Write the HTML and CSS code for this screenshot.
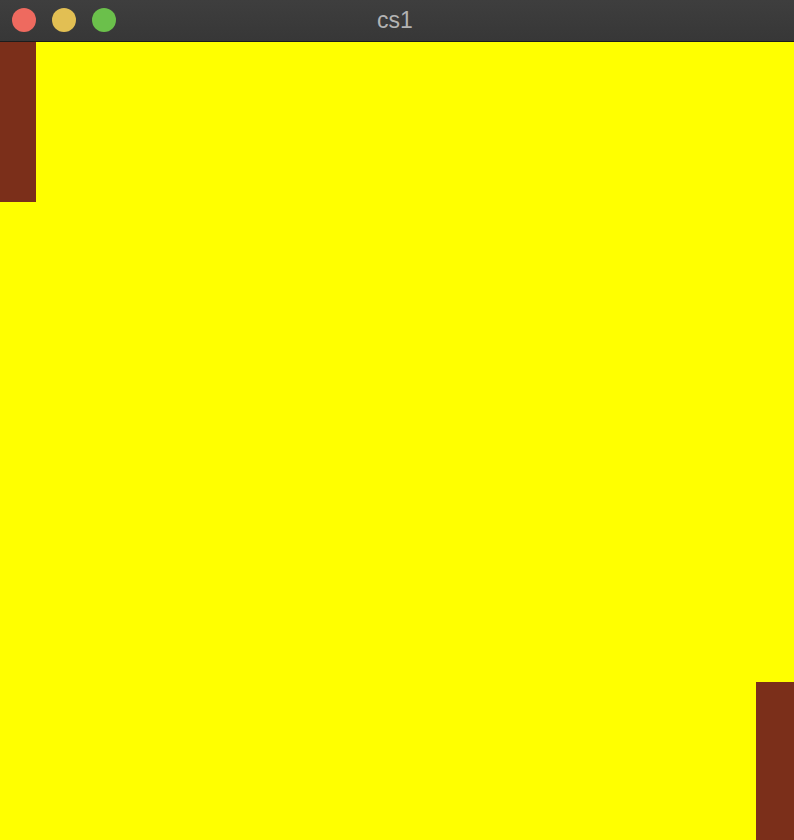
FILE: index.html
```html
<!DOCTYPE html>
<html>
<head>
<meta charset="utf-8">
<link rel="stylesheet" href="styles.css">
</head>
<body>
<div class="window">
  <div class="titlebar">
    <div class="lights">
      <span class="light red"></span>
      <span class="light amber"></span>
      <span class="light green"></span>
    </div>
    <div class="title">cs1</div>
  </div>
  <div class="canvas">
    <div class="block left"></div>
    <div class="block right"></div>
  </div>
</div>
</body>
</html>
```
FILE: styles.css
```css
html, body {
  margin: 0;
  padding: 0;
  width: 794px;
  height: 840px;
  overflow: hidden;
  background: #ffff00;
}
.window {
  width: 794px;
  height: 840px;
  display: flex;
  flex-direction: column;
}
.titlebar {
  height: 41px;
  flex: 0 0 41px;
  background: linear-gradient(#3e3e3e, #373737);
  border-bottom: 1px solid #1c1c1c;
  position: relative;
  display: flex;
  align-items: center;
}
.lights {
  display: flex;
  gap: 16px;
  padding-left: 12px;
  margin-top: -1px;
}
.light {
  width: 24px;
  height: 24px;
  border-radius: 50%;
  display: block;
}
.red { background: #ee6a5f; }
.amber { background: #e2bf53; }
.green { background: #6bc04b; }
.title {
  position: absolute;
  left: 0;
  right: 0;
  top: 0;
  height: 41px;
  line-height: 41px;
  text-align: center;
  font-family: "Liberation Sans", Arial, sans-serif;
  font-size: 23px;
  color: #b3b3b3;
  padding-right: 4px;
}
.canvas {
  flex: 1;
  background: #ffff00;
  display: flex;
  justify-content: space-between;
}
.block {
  background: #7b2f1a;
}
.left {
  width: 36px;
  height: 160px;
  align-self: flex-start;
}
.right {
  width: 38px;
  height: 158px;
  align-self: flex-end;
}
```
